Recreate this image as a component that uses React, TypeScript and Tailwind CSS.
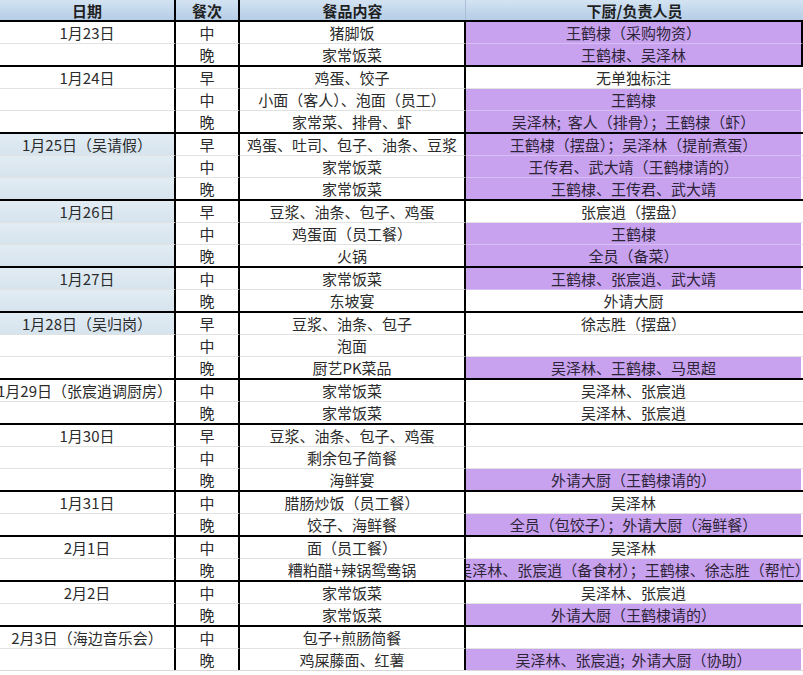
import React from 'react';

// 行：餐次、餐品内容、负责人员、是否紫色高亮
type Row = [string, string, string, boolean];

interface Group {
  date: string;
  blue?: number; // 日期列前几行是浅蓝底
  rows: Row[];
  edge?: boolean;
  dateClass?: string;
}

const P = true;
const W = false;

const groups: Group[] = [
  {
    date: '1月23日',
    edge: true,
    rows: [
      ['中', '猪脚饭', '王鹤棣（采购物资）', P],
      ['晚', '家常饭菜', '王鹤棣、吴泽林', P],
    ],
  },
  {
    date: '1月24日',
    rows: [
      ['早', '鸡蛋、饺子', '无单独标注', W],
      ['中', '小面（客人）、泡面（员工）', '王鹤棣', P],
      ['晚', '家常菜、排骨、虾', '吴泽林;  客人（排骨）；王鹤棣（虾）', P],
    ],
  },
  {
    date: '1月25日（吴请假）',
    blue: 3,
    rows: [
      ['早', '鸡蛋、吐司、包子、油条、豆浆', '王鹤棣（摆盘）；吴泽林（提前煮蛋）', P],
      ['中', '家常饭菜', '王传君、武大靖（王鹤棣请的）', P],
      ['晚', '家常饭菜', '王鹤棣、王传君、武大靖', P],
    ],
  },
  {
    date: '1月26日',
    blue: 3,
    rows: [
      ['早', '豆浆、油条、包子、鸡蛋', '张宸逍（摆盘）', W],
      ['中', '鸡蛋面（员工餐）', '王鹤棣', P],
      ['晚', '火锅', '全员（备菜）', P],
    ],
  },
  {
    date: '1月27日',
    blue: 2,
    rows: [
      ['中', '家常饭菜', '王鹤棣、张宸逍、武大靖', P],
      ['晚', '东坡宴', '外请大厨', W],
    ],
  },
  {
    date: '1月28日（吴归岗）',
    blue: 1,
    rows: [
      ['早', '豆浆、油条、包子', '徐志胜（摆盘）', W],
      ['中', '泡面', '', W],
      ['晚', '厨艺PK菜品', '吴泽林、王鹤棣、马思超', P],
    ],
  },
  {
    date: '1月29日（张宸逍调厨房）',
    dateClass: 'pr-[5px]',
    rows: [
      ['中', '家常饭菜', '吴泽林、张宸逍', W],
      ['晚', '家常饭菜', '吴泽林、张宸逍', W],
    ],
  },
  {
    date: '1月30日',
    rows: [
      ['早', '豆浆、油条、包子、鸡蛋', '', W],
      ['中', '剩余包子简餐', '', W],
      ['晚', '海鲜宴', '外请大厨（王鹤棣请的）', P],
    ],
  },
  {
    date: '1月31日',
    rows: [
      ['中', '腊肠炒饭（员工餐）', '吴泽林', W],
      ['晚', '饺子、海鲜餐', '全员（包饺子）；外请大厨（海鲜餐）', P],
    ],
  },
  {
    date: '2月1日',
    rows: [
      ['中', '面（员工餐）', '吴泽林', W],
      ['晚', '糟粕醋+辣锅鸳鸯锅', '吴泽林、张宸逍（备食材）；王鹤棣、徐志胜（帮忙）', P],
    ],
  },
  {
    date: '2月2日',
    rows: [
      ['中', '家常饭菜', '吴泽林、张宸逍', W],
      ['晚', '家常饭菜', '外请大厨（王鹤棣请的）', P],
    ],
  },
  {
    date: '2月3日（海边音乐会）',
    rows: [
      ['中', '包子+煎肠简餐', '', W],
      ['晚', '鸡屎藤面、红薯', '吴泽林、张宸逍;  外请大厨（协助）', P],
    ],
  },
];

const cell = 'flex items-center justify-center whitespace-pre overflow-hidden h-full';

export default function App() {
  return (
    <div className="w-[803px] h-[675px] overflow-hidden bg-white text-[15px] leading-[21px] text-[#2b2b2b] font-['Noto_Sans_CJK_SC','Noto_Sans',sans-serif]">
      {/* 表头 */}
      <div className="flex h-[22px] border-b-2 border-black bg-linear-to-b from-[#d3e3f2] to-[#b5cde6] font-bold text-[#1f1f1f]">
        <div className={`${cell} w-[176px] border-r-2 border-black`}>日期</div>
        <div className={`${cell} w-[64px] border-r-2 border-black`}>餐次</div>
        <div className={`${cell} w-[226px] border-r border-[#a9bfd8]`}>餐品内容</div>
        <div className={`${cell} flex-1`}>下厨/负责人员</div>
      </div>

      {groups.map((g, gi) => {
        const lastGroup = gi === groups.length - 1;
        return (
          <div key={g.date}>
            {g.rows.map((r, i) => {
              const last = i === g.rows.length - 1;
              const blue = i < (g.blue ?? 0);
              const inner = last ? '' : 'border-b border-[#e2e2e2]';
              const rowCls = last
                ? lastGroup
                  ? 'h-[22px] border-b border-[#d8d8d8]'
                  : 'h-[23px] border-b-2 border-black'
                : 'h-[22px]';
              return (
                <div key={i} className={`flex ${rowCls}`}>
                  <div
                    className={`${cell} w-[176px] border-r-2 border-r-black ${inner} ${
                      blue ? 'bg-linear-to-b from-[#e2ecf3] to-[#d6e4ee]' : 'bg-white'
                    } ${i === 0 ? g.dateClass ?? '' : ''}`}
                  >
                    {i === 0 ? g.date : ''}
                  </div>
                  <div className={`${cell} w-[64px] border-r-2 border-r-black ${inner}`}>{r[0]}</div>
                  <div className={`${cell} w-[226px] border-r-2 border-r-black ${inner}`}>{r[1]}</div>
                  <div
                    className={`${cell} ${g.edge ? 'w-[337px] border-r-2 border-r-black' : 'w-[335px]'} ${
                      r[3]
                        ? `bg-[#c8a2ef] text-[#2d2438] ${last ? '' : 'border-b border-[#d7bff4]'}`
                        : `bg-white ${inner}`
                    }`}
                  >
                    {r[2]}
                  </div>
                  <div className={`flex-1 h-full ${inner}`} />
                </div>
              );
            })}
          </div>
        );
      })}
    </div>
  );
}
